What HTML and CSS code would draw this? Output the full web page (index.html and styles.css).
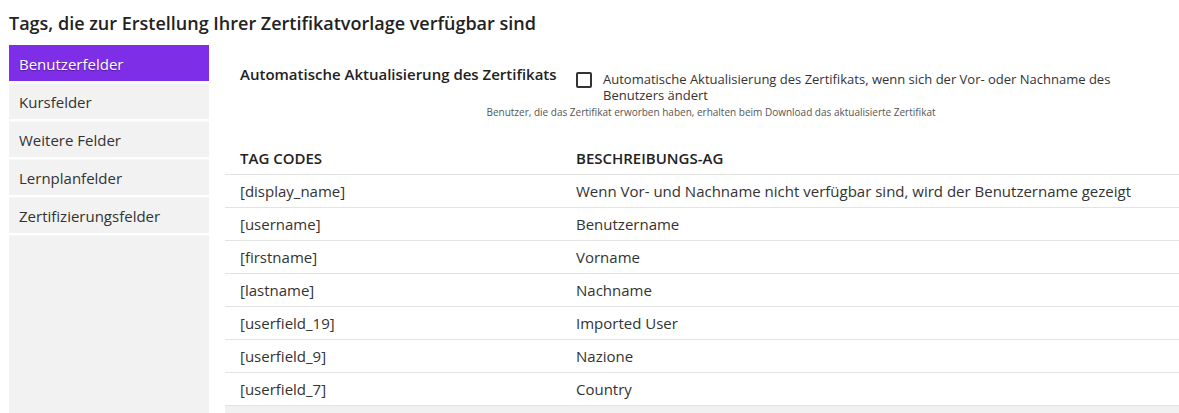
FILE: index.html
```html
<!DOCTYPE html>
<html lang="de">
<head>
    <meta charset="UTF-8">
    <title>Zertifikat-Tags</title>
    <link rel="stylesheet" href="styles.css">
</head>
<body>
    <h1 class="page-title">Tags, die zur Erstellung Ihrer Zertifikatvorlage verfügbar sind</h1>

    <div class="layout">
        <ul class="side-nav">
            <li class="active">Benutzerfelder</li>
            <li>Kursfelder</li>
            <li>Weitere Felder</li>
            <li>Lernplanfelder</li>
            <li>Zertifizierungsfelder</li>
            <li class="filler"></li>
        </ul>

        <div class="content">
            <div class="auto-update">
                <div class="auto-label">Automatische Aktualisierung des Zertifikats</div>
                <label class="auto-check">
                    <span class="box"></span>
                    <span>Automatische Aktualisierung des Zertifikats, wenn sich der Vor- oder Nachname des Benutzers ändert</span>
                </label>
            </div>
            <div class="hint">Benutzer, die das Zertifikat erworben haben, erhalten beim Download das aktualisierte Zertifikat</div>

            <table class="tags">
                <thead>
                    <tr>
                        <th>Tag codes</th>
                        <th>Beschreibungs-AG</th>
                    </tr>
                </thead>
                <tbody>
                    <tr><td>[display_name]</td><td>Wenn Vor- und Nachname nicht verfügbar sind, wird der Benutzername gezeigt</td></tr>
                    <tr><td>[username]</td><td>Benutzername</td></tr>
                    <tr><td>[firstname]</td><td>Vorname</td></tr>
                    <tr><td>[lastname]</td><td>Nachname</td></tr>
                    <tr><td>[userfield_19]</td><td>Imported User</td></tr>
                    <tr><td>[userfield_9]</td><td>Nazione</td></tr>
                    <tr><td>[userfield_7]</td><td>Country</td></tr>
                </tbody>
            </table>
            <div class="table-foot"></div>
        </div>
    </div>
</body>
</html>
```

FILE: styles.css
```css
body {
    font-family: 'Open Sans', 'Liberation Sans', sans-serif;
    margin: 0;
    padding: 0 0 0 9px;
    color: #333;
    background-color: white;
    overflow: hidden;
}
.page-title {
    font-size: 18px;
    font-weight: 600;
    color: #222;
    margin: 0;
    padding: 11px 0 10px;
    line-height: 24px;
}
.layout {
    display: flex;
    gap: 16px;
}
.side-nav {
    list-style: none;
    margin: 0;
    padding: 0;
    width: 200px;
    flex-shrink: 0;
    display: flex;
    flex-direction: column;
    gap: 2px;
    height: 368px;
}
.side-nav li {
    height: 36px;
    line-height: 36px;
    padding-left: 10px;
    font-size: 15px;
    background-color: #f1f2f1;
    border-top: 1px solid #f7f8f7;
    box-sizing: border-box;
    color: #333;
}
.side-nav li.active {
    background-color: #7d2ee6;
    border-top-color: #7d2ee6;
    color: white;
    text-shadow: 0 1px 1px rgba(0, 0, 0, 0.35);
}
.side-nav li.filler {
    flex: 1;
}
.content {
    flex: 1;
}
.auto-update {
    display: flex;
    padding: 20px 0 0 15px;
}
.auto-label {
    width: 336px;
    flex-shrink: 0;
    font-size: 15px;
    font-weight: 600;
    color: #222;
    line-height: 18px;
}
.auto-check {
    display: flex;
    gap: 11px;
    font-size: 13px;
    line-height: 16px;
    width: 540px;
    padding-top: 6px;
}
.auto-check .box {
    width: 12px;
    height: 12px;
    border: 2px solid #333;
    border-radius: 2px;
    flex-shrink: 0;
    margin-top: 1px;
}
.hint {
    font-size: 10px;
    color: #555;
    text-align: center;
    padding-left: 18px;
    margin-top: 2px;
    line-height: 14px;
}
.tags {
    width: 100%;
    border-collapse: collapse;
    margin-top: 23px;
    font-size: 15px;
}
.tags th, .tags td {
    text-align: left;
    padding: 0 15px;
    height: 32px;
    border-bottom: 1px solid #e2e3e2;
}
.tags th {
    text-transform: uppercase;
    font-weight: 600;
    color: #222;
}
.tags th:first-child, .tags td:first-child {
    width: 306px;
}
.table-foot {
    height: 8px;
    background-color: #f0f1f0;
}
```
